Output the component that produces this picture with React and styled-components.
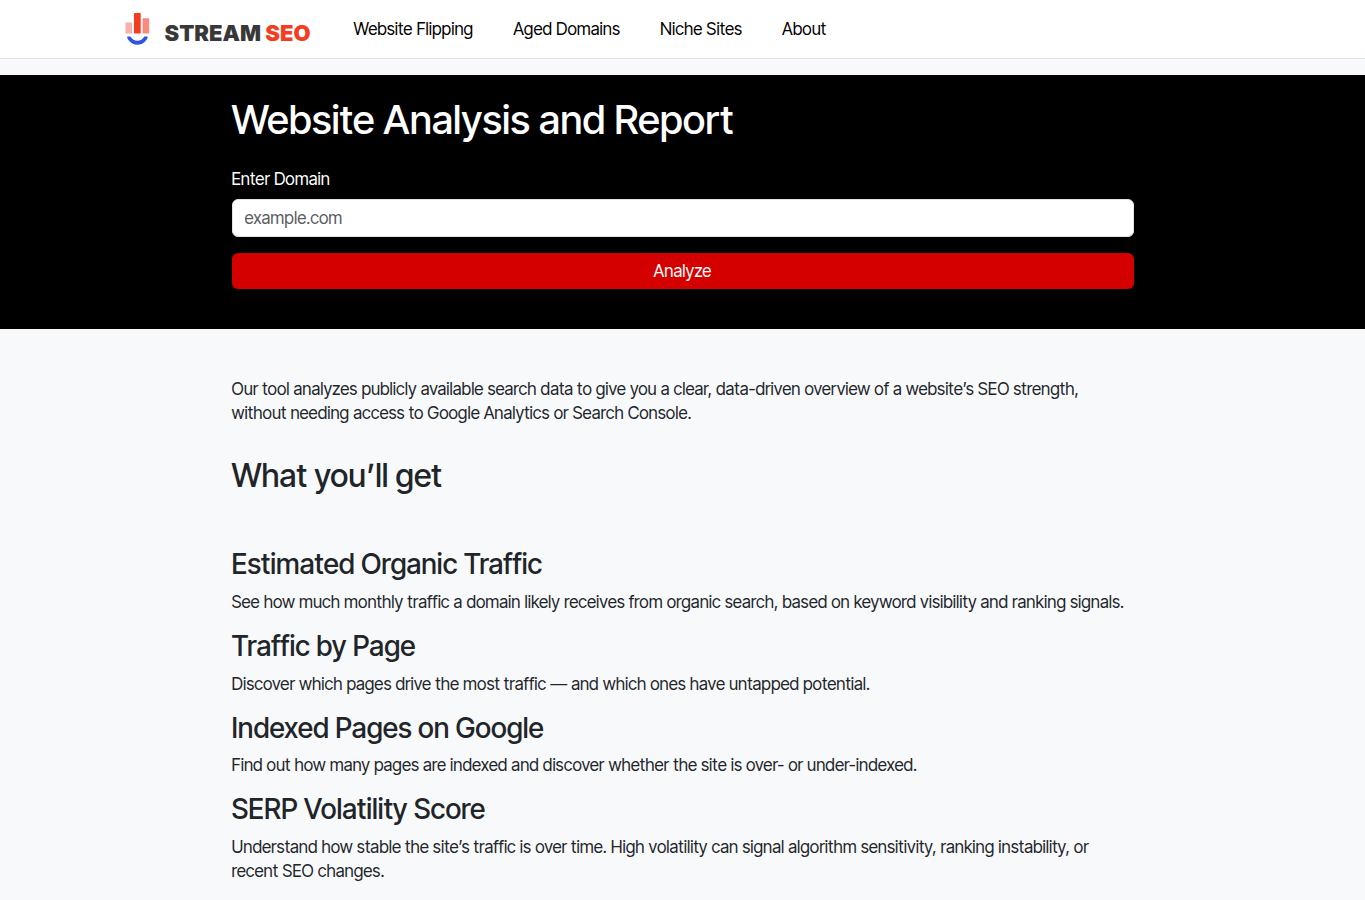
import styled, { createGlobalStyle } from 'styled-components'

const GlobalStyle = createGlobalStyle`
    *, *::before, *::after {
        box-sizing: border-box;
    }

    body {
        margin: 0;
        background-color: #F8F9FB;
        color: #212529;
        font-family: 'Inter Tight', Inter, 'Liberation Sans', sans-serif;
        font-size: 17px;
        line-height: 24px;
    }
`;

const Header = styled.header`
    background-color: #FFFFFF;
    border-bottom: 1px solid #DEE2E6;
    margin-bottom: 16px;
`;

const HeaderInner = styled.div`
    display: flex;
    flex-wrap: wrap;
    align-items: center;
    gap: 12px 43px;
    max-width: 1140px;
    min-height: 58px;
    margin: 0 auto;
    padding: 8px 12px;
`;

const Brand = styled.a`
    display: flex;
    align-items: flex-end;
    gap: 15px;
    color: #383838;
    font-family: Inter, 'Liberation Sans', sans-serif;
    font-size: 22px;
    font-weight: 900;
    line-height: 26px;
    text-decoration: none;
    white-space: nowrap;

    svg {
        display: block;
    }
`;

const BrandAccent = styled.span`
    color: #F43D20;
`;

const Nav = styled.nav`
    display: flex;
    flex-wrap: wrap;
    gap: 8px 40px;
`;

const NavLink = styled.a`
    color: #000000;
    text-decoration: none;
`;

const Hero = styled.section`
    background-color: #000000;
    color: #FFFFFF;
    padding: 21px 16px 40px;
`;

const Container = styled.div`
    max-width: 902px;
    margin: 0 auto;
`;

const HeroTitle = styled.h1`
    margin: 0 0 23px;
    font-size: 40px;
    font-weight: 500;
    line-height: 1.2;
`;

const Form = styled.form`
    display: flex;
    flex-direction: column;
`;

const Label = styled.label`
    margin-bottom: 8px;
`;

const Input = styled.input`
    width: 100%;
    height: 38px;
    margin-bottom: 16px;
    padding: 6px 12px;
    border: 1px solid #DEE2E6;
    border-radius: 6px;
    background-color: #FFFFFF;
    color: #212529;
    font: inherit;

    &::placeholder {
        color: #595C5F;
        opacity: 1;
    }
`;

const Button = styled.button`
    height: 36px;
    padding: 6px 12px;
    border: 0;
    border-radius: 6px;
    background-color: #D40000;
    color: #FFFFFF;
    font: inherit;
    cursor: pointer;
`;

const Main = styled.main`
    padding: 48px 16px;
`;

const Text = styled.p`
    margin: 0 0 16px;
`;

const SectionTitle = styled.h2`
    margin: 32px 0 53px;
    font-size: 32px;
    font-weight: 500;
    line-height: 1.2;
`;

const FeatureTitle = styled.h3`
    margin: 0 0 8px;
    font-size: 28px;
    font-weight: 500;
    line-height: 1.2;
`;

const links = ['Website Flipping', 'Aged Domains', 'Niche Sites', 'About'];

const features = [
    {
        title: 'Estimated Organic Traffic',
        text: 'See how much monthly traffic a domain likely receives from organic search, based on keyword visibility and ranking signals.',
    },
    {
        title: 'Traffic by Page',
        text: 'Discover which pages drive the most traffic — and which ones have untapped potential.',
    },
    {
        title: 'Indexed Pages on Google',
        text: 'Find out how many pages are indexed and discover whether the site is over- or under-indexed.',
    },
    {
        title: 'SERP Volatility Score',
        text: 'Understand how stable the site’s traffic is over time. High volatility can signal algorithm sensitivity, ranking instability, or recent SEO changes.',
    },
];

function LogoMark() {
    return (
        <svg width='25' height='34' viewBox='0 0 25 34' aria-hidden='true'>
            <rect x='0.5' y='10.4' width='6.6' height='11.2' rx='0.5' fill='#FAB0A8' />
            <rect x='9' y='0.9' width='6.7' height='20.7' rx='0.5' fill='#F43D20' />
            <rect x='17.6' y='6.2' width='6.6' height='15.4' rx='0.5' fill='#F88B7C' />
            <path d='M2.3 24.6H5.4C8.6 30.2 16.2 30.2 19.4 24.6H22.6C22.9 25.6 22.4 26.5 21.8 27.4C17 34.6 7.8 34.6 3 27.4C2.4 26.5 1.9 25.6 2.3 24.6Z' fill='#2F55E0' />
        </svg>
    )
}

function App() {
    return (
        <>
            <GlobalStyle />
            <Header>
                <HeaderInner>
                    <Brand href='#'>
                        <LogoMark />
                        <span>STREAM <BrandAccent>SEO</BrandAccent></span>
                    </Brand>
                    <Nav>
                        {links.map((link) => (
                            <NavLink key={link} href='#'>{link}</NavLink>
                        ))}
                    </Nav>
                </HeaderInner>
            </Header>
            <Hero>
                <Container>
                    <HeroTitle>Website Analysis and Report</HeroTitle>
                    <Form onSubmit={(e) => e.preventDefault()}>
                        <Label htmlFor='domain'>Enter Domain</Label>
                        <Input id='domain' type='text' placeholder='example.com' />
                        <Button type='submit'>Analyze</Button>
                    </Form>
                </Container>
            </Hero>
            <Main>
                <Container>
                    <Text>
                        Our tool analyzes publicly available search data to give you a clear, data-driven overview of a website’s SEO strength, without needing access to Google Analytics or Search Console.
                    </Text>
                    <SectionTitle>What you’ll get</SectionTitle>
                    {features.map((feature) => (
                        <section key={feature.title}>
                            <FeatureTitle>{feature.title}</FeatureTitle>
                            <Text>{feature.text}</Text>
                        </section>
                    ))}
                </Container>
            </Main>
        </>
    )
}

export default App
